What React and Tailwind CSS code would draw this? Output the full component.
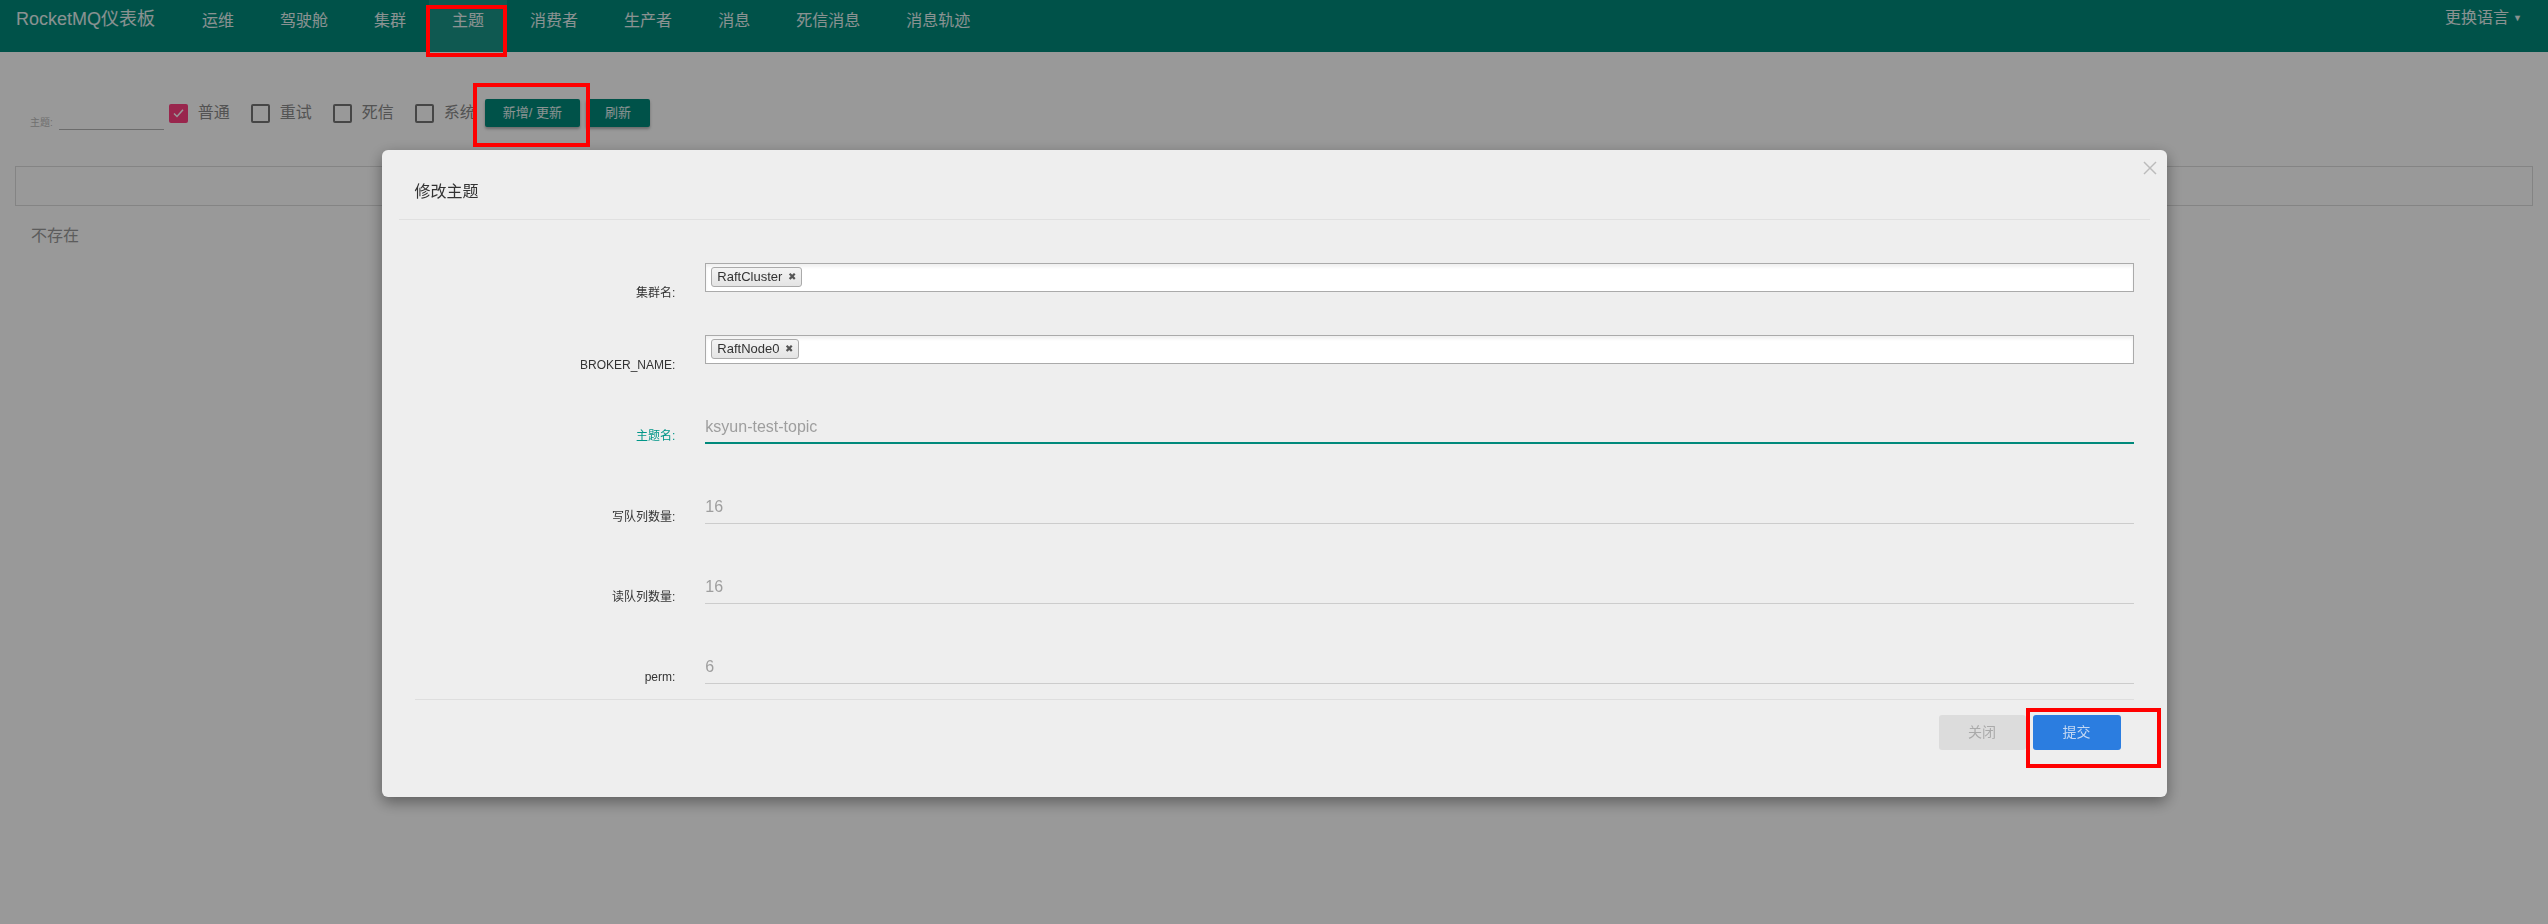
import { useState } from 'react'

const navItems = ['运维', '驾驶舱', '集群', '主题', '消费者', '生产者', '消息', '死信消息', '消息轨迹']

function Checkbox({ checked, label }) {
  return (
    <div className="flex items-center mr-[21px]">
      {checked ? (
        <span className="w-[19px] h-[19px] rounded-[2px] bg-[#ff4081] flex items-center justify-center">
          <svg viewBox="0 0 20 20" className="w-[15px] h-[15px]">
            <polyline points="4,10 8,14 16,5" fill="none" stroke="#ffffff" strokeWidth="2" />
          </svg>
        </span>
      ) : (
        <span className="w-[19px] h-[19px] rounded-[2px] border-2 border-[#757575] box-border" />
      )}
      <span className="ml-[10px] text-[16px] leading-[20px] text-[#8a8a8a]">{label}</span>
    </div>
  )
}

function Tag({ text }) {
  return (
    <span className="ml-[5px] mt-[3px] h-[20px] flex items-center px-[5px] gap-[6px] rounded-[3px] border border-[#aaaaaa] bg-gradient-to-b from-[#f4f4f4] to-[#e4e4e4] text-[13px] text-[#333333]">
      {text}
      <span className="text-[10px] leading-none text-[#555555]">✖</span>
    </span>
  )
}

function TagRow({ label, tag }) {
  return (
    <div className="flex items-start h-[29px]">
      <div className="w-[294px] pt-[23px] text-right text-[12px] leading-[14px] text-[#333333]">{label}</div>
      <div className="ml-[30px] w-[1429px] h-[29px] flex items-start border border-[#aaaaaa] bg-white shadow-[inset_0_3px_3px_rgba(0,0,0,0.06)]">
        <Tag text={tag} />
      </div>
    </div>
  )
}

function TextRow({ label, value, focused, labelPt = 'pt-[18px]' }) {
  return (
    <div className="flex items-start h-[32px]">
      <div
        className={`w-[294px] ${labelPt} text-right text-[12px] leading-[14px] ${
          focused ? 'text-[#009688]' : 'text-[#333333]'
        }`}
      >
        {label}
      </div>
      <div
        className={`ml-[30px] w-[1429px] h-[32px] box-border text-[16px] leading-[30px] text-[#9e9e9e] ${
          focused ? 'border-b-2 border-[#00897b]' : 'border-b border-[#cccccc]'
        }`}
      >
        {value}
      </div>
    </div>
  )
}

export default function App() {
  const [active] = useState('主题')

  return (
    <div className="relative w-full h-[924px] overflow-hidden bg-white font-['Liberation_Sans','Noto_Sans_CJK_SC',sans-serif]">
      {/* Header */}
      <div className="h-[52px] bg-[#00897b] flex items-start text-white/90">
        <div className="pl-[16px] pt-[1px] text-[18px] leading-[36px]">RocketMQ仪表板</div>
        <div className="flex ml-[24px]">
          {navItems.map((item) => (
            <div
              key={item}
              className={`h-[52px] px-[23px] pt-[1px] text-[16px] leading-[40px] ${item === active ? 'bg-white/10' : ''}`}
            >
              {item}
            </div>
          ))}
        </div>
        <div className="ml-auto pr-[26px] flex items-center gap-[4px] text-[16px] leading-[36px]">
          更换语言
          <span className="text-[9px]">▼</span>
        </div>
      </div>

      {/* Page content */}
      <div className="px-[15px]">
        <div className="flex items-start pt-[47px]">
          <div className="flex items-end ml-[15px] mt-[14px]">
            <span className="text-[10px] leading-[12px] mb-[1px] text-[#bbbbbb]">主题:</span>
            <span className="ml-[6px] w-[105px] h-[17px] border-b border-[#b5b5b5]" />
          </div>
          <div className="flex items-center h-[28px] ml-[5px]">
            <Checkbox checked label="普通" />
            <Checkbox label="重试" />
            <Checkbox label="死信" />
            <Checkbox label="系统" />
          </div>
          <button className="ml-[-12px] h-[28px] px-[18px] rounded-[2px] bg-[#00897b] text-[13px] text-white/90 shadow-[0_2px_3px_rgba(0,0,0,0.3)]">
            新增/ 更新
          </button>
          <button className="ml-[6px] h-[28px] px-[19px] rounded-[2px] bg-[#00897b] text-[13px] text-white/90 shadow-[0_2px_3px_rgba(0,0,0,0.3)]">
            刷新
          </button>
        </div>
        <div className="mt-[36px] h-[40px] border border-[#dddddd]" />
        <div className="mt-[20px] pl-[16px] text-[16px] leading-[20px] text-[#999999]">不存在</div>
      </div>

      {/* Overlay + modal */}
      <div className="fixed inset-0 bg-black/40">
        <div className="relative mx-auto mt-[150px] w-[1785px] h-[647px] rounded-[6px] bg-[#eeeeee] shadow-[0_5px_15px_rgba(0,0,0,0.4)]">
          <svg viewBox="0 0 14 14" className="absolute top-[11px] right-[10px] w-[14px] h-[14px]">
            <line x1="1" y1="1" x2="13" y2="13" stroke="#bbbbbb" strokeWidth="1.5" />
            <line x1="13" y1="1" x2="1" y2="13" stroke="#bbbbbb" strokeWidth="1.5" />
          </svg>

          <div className="mx-[17px] pt-[32px] pb-[17px] pl-[16px] border-b border-[#e0e0e0]">
            <h2 className="text-[16px] leading-[20px] text-[#333333]">修改主题</h2>
          </div>

          <div className="mx-[33px] pt-[43px] pb-[15px] border-b border-[#dedede]">
            <div className="-ml-[33px]">
              <TagRow label="集群名:" tag="RaftCluster" />
              <div className="mt-[43px]">
                <TagRow label="BROKER_NAME:" tag="RaftNode0" />
              </div>
              <div className="mt-[48px]">
                <TextRow label="主题名:" value="ksyun-test-topic" focused labelPt="pt-[17px]" />
              </div>
              <div className="mt-[48px]">
                <TextRow label="写队列数量:" value="16" />
              </div>
              <div className="mt-[48px]">
                <TextRow label="读队列数量:" value="16" />
              </div>
              <div className="mt-[48px]">
                <TextRow label="perm:" value="6" />
              </div>
            </div>
          </div>

          <div className="flex justify-end gap-[7px] pt-[15px] pr-[46px]">
            <button className="w-[87px] h-[35px] rounded-[3px] bg-[#dcdcdc] text-[14px] text-[#aaaaaa]">关闭</button>
            <button className="w-[88px] h-[35px] rounded-[3px] bg-[#2b7de0] text-[14px] text-[#c4d8f3]">提交</button>
          </div>
        </div>
      </div>

      {/* Annotation boxes */}
      <div className="absolute left-[426px] top-[5px] w-[81px] h-[52px] border-4 border-[#ff0000] z-50" />
      <div className="absolute left-[473px] top-[83px] w-[117px] h-[64px] border-4 border-[#ff0000] z-50" />
      <div className="absolute left-[2026px] top-[708px] w-[135px] h-[60px] border-4 border-[#ff0000] z-50" />
    </div>
  )
}
